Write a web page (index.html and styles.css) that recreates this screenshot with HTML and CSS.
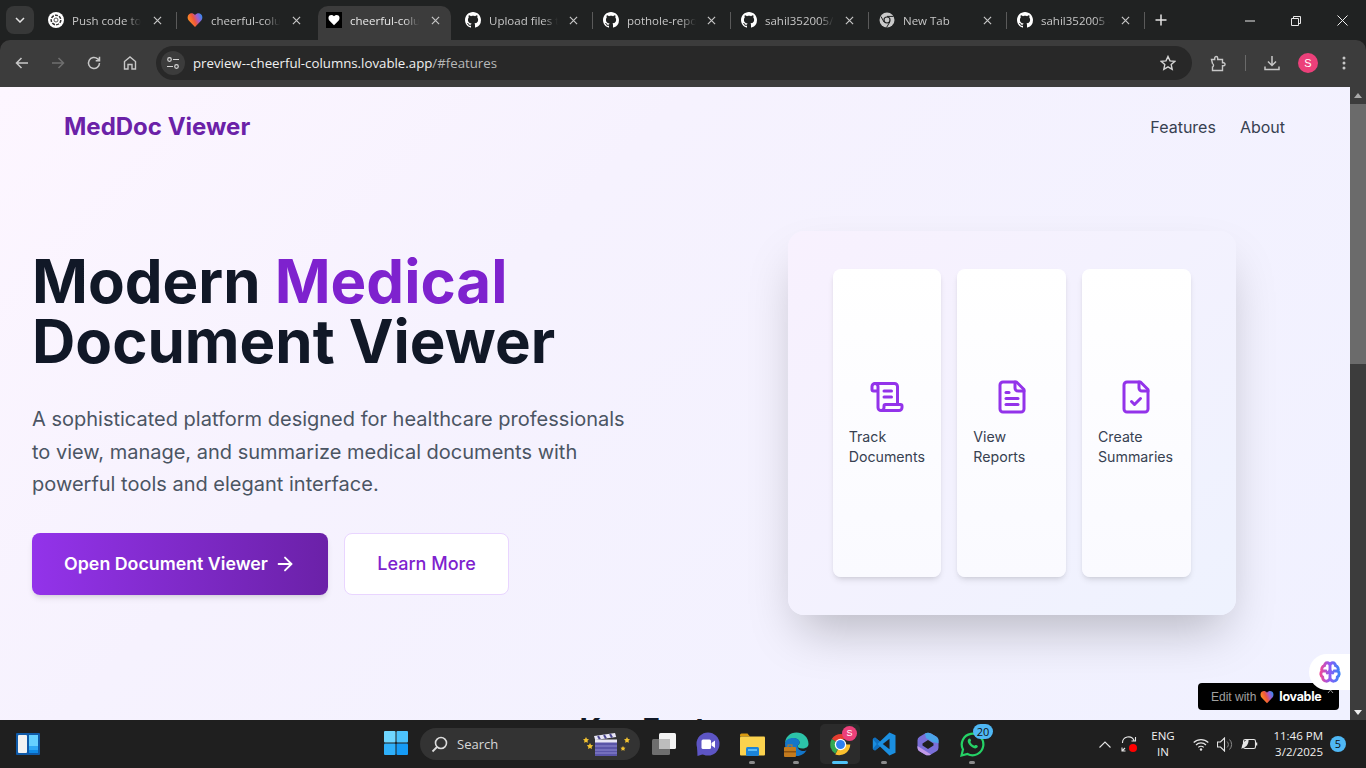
FILE: index.html
```html
<!DOCTYPE html>
<html lang="en">
<head>
<meta charset="utf-8">
<title>MedDoc Viewer</title>
<link rel="stylesheet" href="styles.css">
</head>
<body>
<svg class="defs" width="0" height="0" aria-hidden="true">
  <defs>
    <linearGradient id="heartG" x1="0" y1=".6" x2="1" y2=".2">
      <stop offset="0" stop-color="#ff9a1e"/><stop offset=".42" stop-color="#f0563a"/><stop offset=".68" stop-color="#a05cd0"/><stop offset="1" stop-color="#2f8df0"/>
    </linearGradient>
    <linearGradient id="brainG" x1="0" y1="0" x2="1" y2="0">
      <stop offset="0" stop-color="#ec4899"/><stop offset=".5" stop-color="#8b5cf6"/><stop offset="1" stop-color="#3b82f6"/>
    </linearGradient>
    <symbol id="gh" viewBox="0 0 16 16"><path fill="#fff" d="M8 0C3.58 0 0 3.58 0 8c0 3.54 2.29 6.53 5.47 7.59.4.07.55-.17.55-.38 0-.19-.01-.82-.01-1.49-2.01.37-2.53-.49-2.69-.94-.09-.23-.48-.94-.82-1.13-.28-.15-.68-.52-.01-.53.63-.01 1.08.58 1.23.82.72 1.21 1.87.87 2.33.66.07-.52.28-.87.51-1.07-1.78-.2-3.64-.89-3.64-3.95 0-.87.31-1.59.82-2.15-.08-.2-.36-1.02.08-2.12 0 0 .67-.21 2.2.82.64-.18 1.32-.27 2-.27s1.36.09 2 .27c1.53-1.04 2.2-.82 2.2-.82.44 1.1.16 1.92.08 2.12.51.56.82 1.27.82 2.15 0 3.07-1.87 3.75-3.65 3.95.29.25.54.73.54 1.48 0 1.07-.01 1.93-.01 2.2 0 .21.15.46.55.38A8.01 8.01 0 0 0 16 8c0-4.42-3.58-8-8-8z"/></symbol>
    <symbol id="heart" viewBox="0 0 24 24"><path d="M12 22.500 2.600 12.800C.2 10.200.4 5.400 3 3.200c2.600-2.200 6.500-1.600 9 1.300 2.500-2.900 6.400-3.500 9-1.300 2.600 2.200 2.800 7 .4 9.600z"/></symbol>
    <symbol id="x" viewBox="0 0 10 10"><path d="M1 1l8 8M9 1L1 9" fill="none" stroke="#c7c7c7" stroke-width="1.300"/></symbol>
  </defs>
</svg>

<header class="chrome">
  <div class="tabstrip">
    <button class="tab-menu"><svg width="10" height="6" viewBox="0 0 10 6"><path d="M1 1l4 4 4-4" fill="none" stroke="#e3e3e3" stroke-width="1.500"/></svg></button>
    <div class="tabs">
      <div class="tab sep">
        <svg class="fav" viewBox="0 0 16 16"><circle cx="8" cy="8" r="8" fill="#fff"/><circle cx="8" cy="8" r="4.800" fill="none" stroke="#333" stroke-width="1.500" stroke-dasharray="3 1.200"/><circle cx="8" cy="8" r="2" fill="none" stroke="#555" stroke-width="1"/></svg>
        <span class="tab-title">Push code to GitHub</span>
        <svg class="tab-x"><use href="#x"/></svg>
      </div>
      <div class="tab">
        <svg class="fav" fill="url(#heartG)"><use href="#heart"/></svg>
        <span class="tab-title">cheerful-columns</span>
        <svg class="tab-x"><use href="#x"/></svg>
      </div>
      <div class="tab active">
        <span class="fav fav-black"><svg width="12" height="12" fill="#fff"><use href="#heart"/></svg></span>
        <span class="tab-title">cheerful-columns</span>
        <svg class="tab-x"><use href="#x"/></svg>
      </div>
      <div class="tab sep">
        <svg class="fav"><use href="#gh"/></svg>
        <span class="tab-title">Upload files to</span>
        <svg class="tab-x"><use href="#x"/></svg>
      </div>
      <div class="tab sep">
        <svg class="fav"><use href="#gh"/></svg>
        <span class="tab-title">pothole-report</span>
        <svg class="tab-x"><use href="#x"/></svg>
      </div>
      <div class="tab sep">
        <svg class="fav"><use href="#gh"/></svg>
        <span class="tab-title">sahil352005/pot</span>
        <svg class="tab-x"><use href="#x"/></svg>
      </div>
      <div class="tab sep">
        <svg class="fav" viewBox="0 0 16 16"><circle cx="8" cy="8" r="7.500" fill="#c9c9c9"/><circle cx="8" cy="8" r="3.600" fill="#202222"/><circle cx="8" cy="8" r="2.400" fill="#c9c9c9"/><path d="M8 4.400h6.500M5 10l-3-5.500M10.800 10 7.500 15.500" stroke="#202222" stroke-width="1"/></svg>
        <span class="tab-title">New Tab</span>
        <svg class="tab-x"><use href="#x"/></svg>
      </div>
      <div class="tab sep">
        <svg class="fav"><use href="#gh"/></svg>
        <span class="tab-title">sahil352005 - pot</span>
        <svg class="tab-x"><use href="#x"/></svg>
      </div>
    </div>
    <svg class="plus" width="12" height="12" viewBox="0 0 12 12"><path d="M6 .5v11M.5 6h11" stroke="#e3e3e3" stroke-width="1.500"/></svg>
    <div class="win-controls">
      <svg width="10" height="10" viewBox="0 0 10 10"><path d="M0 5h10" stroke="#e8e8e8"/></svg>
      <svg width="10" height="10" viewBox="0 0 10 10"><path d="M.5 2.500h7v7h-7zM2.500 2.500V.5h7v7H7.500" fill="none" stroke="#e8e8e8"/></svg>
      <svg width="11" height="11" viewBox="0 0 11 11"><path d="M.5.5l10 10M10.500.5l-10 10" stroke="#f0f0f0"/></svg>
    </div>
  </div>
  <div class="toolbar">
    <div class="nav-btns">
      <svg width="16" height="16" viewBox="0 0 16 16"><path d="M14 8H2.500M7.500 3l-5 5 5 5" fill="none" stroke="#c7c7c7" stroke-width="1.500"/></svg>
      <svg width="16" height="16" viewBox="0 0 16 16"><path d="M2 8h11.500M8.500 3l5 5-5 5" fill="none" stroke="#6f6f6f" stroke-width="1.500"/></svg>
      <svg width="16" height="16" viewBox="0 0 16 16"><path d="M13.500 8A5.500 5.500 0 1 1 11.700 3.900L13.500 5.500M13.500 1.800v3.900H9.700" fill="none" stroke="#c7c7c7" stroke-width="1.500"/></svg>
      <svg width="16" height="16" viewBox="0 0 16 16"><path d="M2.500 14V6.500L8 2l5.500 4.500V14H10V9.500H6V14z" fill="none" stroke="#c7c7c7" stroke-width="1.400"/></svg>
    </div>
    <div class="omnibox">
      <span class="site-info"><svg width="14" height="14" viewBox="0 0 14 14"><g fill="none" stroke="#d5d5d5" stroke-width="1.200"><circle cx="3.500" cy="3.500" r="1.800"/><path d="M7 3.500h6M1 10.500h6"/><circle cx="10.500" cy="10.500" r="1.800"/></g></svg></span>
      <span class="url">preview--cheerful-columns.lovable.app<span class="url-dim">/#features</span></span>
      <svg class="star" width="16" height="16" viewBox="0 0 16 16"><path d="M8 1.500l2 4.400 4.700.5-3.500 3.200 1 4.700L8 11.900l-4.200 2.400 1-4.700L1.300 6.400 6 5.900z" fill="none" stroke="#d5d5d5" stroke-width="1.400"/></svg>
    </div>
    <div class="tool-right">
      <svg class="ext" width="17" height="17" viewBox="0 0 17 17"><path d="M1.500 4.500h3.200V3a1.500 1.500 0 0 1 3 0v1.500h4.800v3.200h1a1.500 1.500 0 0 1 0 3.100h-1v4.700h-10v-3.500a2 2 0 0 0 0-3.500z" fill="none" stroke="#c7c7c7" stroke-width="1.400"/></svg>
      <span class="tool-sep"></span>
      <svg class="dl" width="16" height="16" viewBox="0 0 16 16"><path d="M8 1v9M4 6.500 8 10.500l4-4M1 11.500v3h14v-3" fill="none" stroke="#c7c7c7" stroke-width="1.500"/></svg>
      <span class="avatar">S</span>
      <svg class="dots" width="4" height="14" viewBox="0 0 4 14"><circle cx="2" cy="2" r="1.500" fill="#c7c7c7"/><circle cx="2" cy="7" r="1.500" fill="#c7c7c7"/><circle cx="2" cy="12" r="1.500" fill="#c7c7c7"/></svg>
    </div>
  </div>
</header>

<div class="viewport">
  <main class="page">
    <nav class="site-nav">
      <a class="brand">MedDoc Viewer</a>
      <div class="site-links"><a>Features</a><a>About</a></div>
    </nav>
    <section class="hero">
      <div class="hero-copy">
        <h1>Modern <span class="accent">Medical</span><br>Document Viewer</h1>
        <p class="lead">A sophisticated platform designed for healthcare professionals to view, manage, and summarize medical documents with powerful tools and elegant interface.</p>
        <div class="cta-row">
          <a class="btn btn-primary">Open Document Viewer
            <svg width="22" height="22" viewBox="0 0 24 24" fill="none" stroke="currentColor" stroke-width="2" stroke-linecap="round" stroke-linejoin="round"><path d="M5 12h14"/><path d="m12 5 7 7-7 7"/></svg>
          </a>
          <a class="btn btn-outline">Learn More</a>
        </div>
      </div>
      <div class="panel">
        <div class="mini-card">
          <svg class="mini-icon" viewBox="0 0 24 24"><path d="M15 12h-5"/><path d="M15 8h-5"/><path d="M19 17V5a2 2 0 0 0-2-2H4"/><path d="M8 21h12a2 2 0 0 0 2-2v-1a1 1 0 0 0-1-1H11a1 1 0 0 0-1 1v1a2 2 0 1 1-4 0V5a2 2 0 1 0-4 0v2a1 1 0 0 0 1 1h3"/></svg>
          <span class="mini-label">Track Documents</span>
        </div>
        <div class="mini-card">
          <svg class="mini-icon" viewBox="0 0 24 24"><path d="M15 2H6a2 2 0 0 0-2 2v16a2 2 0 0 0 2 2h12a2 2 0 0 0 2-2V7Z"/><path d="M14 2v4a2 2 0 0 0 2 2h4"/><path d="M10 9H8"/><path d="M16 13H8"/><path d="M16 17H8"/></svg>
          <span class="mini-label">View Reports</span>
        </div>
        <div class="mini-card">
          <svg class="mini-icon" viewBox="0 0 24 24"><path d="M15 2H6a2 2 0 0 0-2 2v16a2 2 0 0 0 2 2h12a2 2 0 0 0 2-2V7Z"/><path d="M14 2v4a2 2 0 0 0 2 2h4"/><path d="m9 15 2 2 4-4"/></svg>
          <span class="mini-label">Create Summaries</span>
        </div>
      </div>
    </section>
    <h2 class="features-title">Key Features</h2>
  </main>
  <div class="scrollbar">
    <span class="sb-arrow"></span>
    <span class="sb-thumb"></span>
    <span class="sb-fill"></span>
    <span class="sb-arrow down"></span>
  </div>
  <div class="lovable-badge">
    <span class="edit-with">Edit with</span>
    <svg width="14" height="14" fill="url(#heartG)"><use href="#heart"/></svg>
    <span class="lovable-word">lovable</span>
    <svg class="badge-x" width="7" height="5" viewBox="0 0 7 5"><path d="M1 4l2.500-3L6 4" fill="none" stroke="#999" stroke-width="1"/></svg>
  </div>
  <div class="brain-bubble">
    <svg width="22" height="22" viewBox="0 0 24 24" fill="none" stroke="url(#brainG)" stroke-width="3.200" stroke-linecap="round" stroke-linejoin="round"><path d="M12 5a3 3 0 1 0-5.997.125 4 4 0 0 0-2.526 5.770 4 4 0 0 0 .556 6.588A4 4 0 1 0 12 18ZM12 5a3 3 0 1 1 5.997.125 4 4 0 0 1 2.526 5.770 4 4 0 0 1-.556 6.588A4 4 0 1 1 12 18ZM15 13a4.500 4.500 0 0 1-3-4 4.500 4.500 0 0 1-3 4M3.500 11h4M20.500 11h-4"/></svg>
  </div>
</div>

<footer class="taskbar">
  <div class="widgets">
    <svg width="24" height="22" viewBox="0 0 24 22"><rect width="24" height="22" rx="1" fill="#0f5aa8"/><rect x="2" y="2" width="9" height="18" rx="1" fill="#f2f2f2"/><rect x="13" y="2" width="9" height="11" fill="#66d0ff"/><rect x="13" y="13" width="9" height="4" fill="#2fa8f5"/><rect x="13" y="17" width="9" height="3" fill="#0f8ae8"/></svg>
  </div>
  <div class="task-center">
    <svg class="win-logo" width="24" height="24" viewBox="0 0 24 24"><rect width="11.500" height="11.500" rx="1" fill="#6fd6ff"/><rect x="12.500" width="11.500" height="11.500" rx="1" fill="#4cc2fb"/><rect y="12.500" width="11.500" height="11.500" rx="1" fill="#2fb0fa"/><rect x="12.500" y="12.500" width="11.500" height="11.500" rx="1" fill="#159bf5"/></svg>
    <div class="search-pill">
      <svg width="17" height="17" viewBox="0 0 17 17"><circle cx="10" cy="7" r="5.500" fill="none" stroke="#dcdcdc" stroke-width="1.600"/><path d="M6 11l-4.500 4.500" stroke="#dcdcdc" stroke-width="1.800"/></svg>
      <span class="search-text">Search</span>
      <svg class="clapper" width="56" height="32" viewBox="0 0 56 32">
        <path d="M6 9l1 2 2 .3-1.500 1.500.4 2L6 14l-1.900.8.4-2L3 11.300l2-.3z" fill="#f2c230"/>
        <path d="M10 15l1 2 2.200.3-1.600 1.600.4 2.100-2-1-2 1 .4-2.100L6.800 17.300 9 17z" fill="#f2c230"/>
        <path d="M47 9l1 2 2 .3-1.500 1.500.4 2L47 14l-1.900.8.4-2-1.500-1.500 2-.3z" fill="#f2c230"/>
        <path d="M43 18l.8 1.600 1.700.2-1.200 1.200.3 1.700-1.600-.8-1.600.8.300-1.700-1.200-1.200 1.700-.2z" fill="#f2c230"/>
        <rect x="15" y="14" width="22" height="14" fill="#5a55a8"/>
        <path d="M15 18h22M15 22h22M15 25h22" stroke="#8f8bd0" stroke-width="1"/>
        <path d="M14 8l21-3 1.200 4-21 3z" fill="#e8e6f5"/>
        <path d="M18 8l2 3.500M24 7l2 3.500M30 6l2 3.500" stroke="#4a4690" stroke-width="2"/>
        <rect x="15" y="11.500" width="22" height="3" fill="#e8e6f5"/>
      </svg>
    </div>
    <svg class="ti ti-view" width="25" height="22" viewBox="0 0 25 22"><rect x="7" y="0" width="17" height="16" rx="1.500" fill="#f4f4f4"/><rect y="6" width="18" height="16" rx="1.500" fill="#6e6e6e"/><rect x="7" y="6" width="11" height="10" fill="#bdbdbd"/></svg>
    <svg class="ti ti-meet" width="24" height="25" viewBox="0 0 24 25"><circle cx="12" cy="12" r="11.500" fill="#5d55c4"/><path d="M1 14 1.500 24 8 22z" fill="#5d55c4"/><rect x="5.500" y="7.500" width="9.500" height="9.500" rx="1.500" fill="#fff"/><path d="M15.500 11l3.500-2.500v7.500L15.500 13.500z" fill="#fff"/></svg>
    <span class="ti-wrap ti-files">
      <svg width="25" height="23" viewBox="0 0 25 23"><path d="M0 2a1.500 1.500 0 0 1 1.500-1.500h6L10 3.500H0z" fill="#d99a10"/><rect y="3.500" width="25" height="19" rx="1" fill="#fbd24e"/><rect x="6" y="14" width="13" height="9" rx="1.500" fill="#1c84d8"/><rect x="8" y="16" width="9" height="2" fill="#5dbcf5"/></svg>
      <i class="pin"></i>
    </span>
    <span class="ti-wrap ti-edge">
      <svg width="25" height="25" viewBox="0 0 25 25"><path d="M1 12C1 5 6 .5 12.500.5 19 .5 24.500 5 24.500 12c0 3-3 4.500-6 4.500-3.500 0-5-1-5-2.500 0-1 2-1 2-3.500S13 6.500 10 6.500 1 8 1 12z" fill="#2cc3a8"/><path d="M1 12c0-4 4-6 8-6 3 0 6.500 1 6.500 4.500 0 2.500-2 2.500-2 3.500 0 3 3 5 6 5 1.500 0 2.500-.5 3-1-1.500 3.500-5.500 6-9.500 6C6 24 1 19 1 12z" fill="#1476c9"/><rect x="0" y="15" width="12" height="10" rx="1" fill="#c47b1e"/><rect x="0" y="19" width="12" height="1.500" fill="#8c5210"/><rect x="4" y="13" width="4" height="2.500" fill="none" stroke="#c47b1e"/></svg>
      <i class="pin"></i>
    </span>
    <span class="ti-wrap ti-chrome">
      <svg width="25" height="25" viewBox="0 0 24 24"><path d="M12 12 3.600 6.800A10.500 10.500 0 0 1 21.400 7H12z" fill="#e53d30"/><path d="M12 12 7 20.900A10.500 10.500 0 0 1 3.600 6.800z" fill="#34a853"/><path d="M12 12h9.400A10.500 10.500 0 0 1 7 21.500z" fill="#fbc02d"/><circle cx="12" cy="12" r="5.500" fill="#fff"/><circle cx="12" cy="12" r="4.300" fill="#2f7ff0"/></svg>
      <b class="chrome-badge">S</b>
      <i class="pin pin-active"></i>
    </span>
    <span class="ti-wrap ti-code">
      <svg width="24" height="24" viewBox="0 0 24 24"><path d="M17.500.5 8 9.500 3 5.500.8 7v10L3 18.500l5-4 9.500 9 6-2.800V3.300z" fill="#1b8fe0"/><path d="M17.500 6.800 10.800 12l6.700 5.200z" fill="#1f1f1f"/><path d="M.8 7 3 5.500l5 4-2.500 2.500 2.500 2.500-5 4L.8 17l4-5z" fill="#0f6fc0"/></svg>
      <i class="pin"></i>
    </span>
    <svg class="ti ti-copilot" width="22" height="24" viewBox="0 0 22 24"><path d="M8 1.500a6 6 0 0 1 6 0l5.500 3.200a4 4 0 0 1 2 3.500v7.600a4 4 0 0 1-2 3.500L14 22.500a6 6 0 0 1-6 0l-5.500-3.200a4 4 0 0 1-2-3.500V8.200a4 4 0 0 1 2-3.500z" fill="#7a6fd8"/><path d="M8 1.500a6 6 0 0 1 6 0l5.500 3.200a4 4 0 0 1 2 3.500v3L15.500 10 9 6z" fill="#4aa4e8"/><path d="M.5 14 7 18l7 4.500a6 6 0 0 1-6 0l-5.500-3.200a4 4 0 0 1-2-3.500z" fill="#c29ae8"/><path d="M11 8l5.500 3.500v2L11 17l-5.500-3.500v-2z" fill="#1f1f1f"/></svg>
    <span class="ti-wrap ti-wa">
      <svg width="25" height="25" viewBox="0 0 25 25"><path d="M1.500 23.500 3 17.500A10.800 10.800 0 1 1 7.500 22z" fill="none" stroke="#25d366" stroke-width="2.200"/><path d="M8.500 7c1-1 2-.5 2.500 1 .3 1-.8 1.500-.5 2.300.7 1.500 2 2.700 3.500 3.300.8.300 1.300-.8 2.300-.5 1.500.5 2 1.500 1 2.500-1.500 1.500-4 .8-6.800-1.500C7.800 11.500 7 8.500 8.500 7z" fill="#25d366"/></svg>
      <b class="wa-badge">20</b>
      <i class="pin"></i>
    </span>
  </div>
  <div class="tray">
    <svg class="caret" width="12" height="7" viewBox="0 0 12 7"><path d="M.5 6.500 6 1l5.500 5.500" fill="none" stroke="#e5e5e5" stroke-width="1.100"/></svg>
    <span class="sync">
      <svg width="16" height="16" viewBox="0 0 16 16"><path d="M1.500 7A6 6 0 0 1 13 4.500M14.500 1v4h-4M14 9a6 6 0 0 1-4 5M1 15l3-3M1 11.500V15h3.500" fill="none" stroke="#e5e5e5" stroke-width="1.100"/></svg>
      <i class="rec"></i>
    </span>
    <div class="lang">ENG<br>IN</div>
    <svg class="wifi" width="16" height="13" viewBox="0 0 16 13"><path d="M.7 4.500a10.500 10.500 0 0 1 14.600 0M3 7a7 7 0 0 1 10 0M5.300 9.400a3.700 3.700 0 0 1 5.400 0" fill="none" stroke="#e5e5e5" stroke-width="1.200"/><circle cx="8" cy="11.500" r="1.200" fill="#e5e5e5"/></svg>
    <svg class="speaker" width="17" height="15" viewBox="0 0 17 15"><path d="M.5 5v5h3l4 4V1l-4 4z" fill="none" stroke="#e5e5e5" stroke-width="1.100"/><path d="M10 4.500a4 4 0 0 1 0 6M12.500 2.500a7 7 0 0 1 0 10" fill="none" stroke="#8a8a8a" stroke-width="1"/></svg>
    <svg class="battery" width="17" height="12" viewBox="0 0 17 12"><rect x="2.500" y="1.500" width="12" height="9" rx="1.800" fill="none" stroke="#e5e5e5" stroke-width="1.100"/><path d="M15.500 4.500v3" stroke="#e5e5e5" stroke-width="1.500"/><path d="M.5 11C1 6 3 2.500 7.500 1 8 5 6 9 2.500 9.500z" fill="#e5e5e5"/></svg>
    <div class="clock">11:46 PM<br>3/2/2025</div>
    <span class="notif">5</span>
  </div>
</footer>
</body>
</html>
```
FILE: styles.css
```css
* { box-sizing: border-box; margin: 0; padding: 0; }
html, body { width: 1366px; height: 768px; overflow: hidden; }
body { display: flex; flex-direction: column; font-family: Inter, "Liberation Sans", sans-serif; background: #1f1f1f; }
a { text-decoration: none; color: inherit; }
.defs { position: absolute; }

/* browser chrome */
.chrome { height: 87px; flex: none; font-family: "Open Sans", "Noto Sans", sans-serif; }
.tabstrip { height: 40px; background: #202222; display: flex; align-items: flex-end; position: relative; }
.tab-menu { width: 28px; height: 28px; margin: 0 6px 6px; background: #373838; border: 0; border-radius: 8px; display: flex; align-items: center; justify-content: center; }
.tabs { display: flex; height: 34px; }
.tab { width: 138px; height: 34px; display: flex; align-items: center; padding: 0 0 6px 8px; position: relative; }
.tab:nth-child(-n+3) { width: 139px; }
.tab.sep::after { content: ""; position: absolute; right: 2px; top: 6px; height: 17px; width: 1px; background: #5a5a5a; }
.tab.active { width: 133px; margin-right: 6px; background: #3c3c3c; border-radius: 10px 10px 0 0; }
.fav { width: 16px; height: 16px; flex: none; }
.fav-black { background: #000; display: flex; align-items: center; justify-content: center; }
.tab-title { width: 69px; margin-left: 8px; font-size: 11.5px; color: #c7c7c7; white-space: nowrap; overflow: hidden; -webkit-mask-image: linear-gradient(90deg, #000 78%, transparent 100%); mask-image: linear-gradient(90deg, #000 78%, transparent 100%); }
.tab.active .tab-title { color: #e8e8e8; }
.tab-x { width: 9px; height: 9px; margin-left: 12px; flex: none; }
.tab:nth-child(n+4) .tab-x { margin-left: 11px; }
.plus { position: absolute; left: 1155px; top: 14px; }
.win-controls { position: absolute; right: 18px; top: 15px; display: flex; gap: 36px; align-items: center; }
.toolbar { height: 47px; background: #3c3c3c; border-radius: 10px 10px 0 0; display: flex; align-items: flex-start; padding-top: 6px; }
.nav-btns { width: 156px; height: 34px; flex: none; padding-left: 14px; display: flex; gap: 20px; align-items: center; }
.omnibox { width: 1036px; height: 34px; background: #282828; border-radius: 17px; display: flex; align-items: center; padding-left: 5px; }
.site-info { width: 24px; height: 24px; border-radius: 50%; background: #3c3c3c; display: flex; align-items: center; justify-content: center; flex: none; }
.url { margin-left: 8px; font-size: 13.25px; color: #f0f0f0; white-space: nowrap; flex: 1; }
.url-dim { color: #b8b8b8; }
.star { margin-right: 16px; }
.tool-right { flex: 1; height: 34px; display: flex; align-items: center; }
.ext { margin-left: 18px; }
.tool-sep { width: 1px; height: 16px; background: #6a6a6a; margin: 0 18px; }
.dl { margin-right: 18px; }
.avatar { width: 20px; height: 20px; border-radius: 50%; background: #ec407a; color: #fff; font: 11px/20px "Liberation Sans", sans-serif; text-align: center; }
.dots { margin-left: 24px; }

/* viewport */
.viewport { height: 633px; flex: none; display: flex; position: relative; overflow: hidden; }
.page { width: 1350px; height: 633px; overflow: hidden; background: linear-gradient(135deg, #fdf6ff 0%, #f6f2fe 35%, #f0f1ff 100%); }
.site-nav { height: 80px; padding: 0 65px 0 64px; display: flex; align-items: center; justify-content: space-between; }
.brand { font-size: 24px; font-weight: 700; color: #6b21a8; margin-bottom: 2px; }
.site-links { display: flex; gap: 24px; font-size: 16px; color: #374151; }
.hero { display: flex; justify-content: space-between; padding: 64px 114px 0 32px; height: 544px; }
.hero-copy { width: 620px; }
h1 { font-size: 60px; line-height: 60px; font-weight: 700; color: #111827; margin-top: 20px; }
.accent { color: #7e22ce; }
.lead { font-size: 20px; line-height: 32.5px; color: #4b5563; margin-top: 32px; width: 610px; }
.cta-row { display: flex; gap: 16px; margin-top: 32px; }
.btn { height: 62px; display: flex; align-items: center; justify-content: center; font-size: 18px; font-weight: 500; border-radius: 8px; }
.btn-primary { width: 296px; gap: 6px; color: #fff; font-size: 17.8px; font-weight: 600; background: linear-gradient(90deg, #9333ea, #6b21a8); box-shadow: 0 4px 6px -1px rgba(0,0,0,.1), 0 2px 4px -2px rgba(0,0,0,.1); }
.btn-outline { width: 165px; color: #7e22ce; background: #fff; border: 1px solid #e9d5ff; }
.panel { width: 448px; height: 384px; background: linear-gradient(135deg, #f8f1fe, #eef2fe); border-radius: 16px; padding: 38px 45.33px 38px 44.67px; display: flex; gap: 16px; box-shadow: 0 25px 50px -12px rgba(0,0,0,.25); }
.mini-card { flex: 1 1 0; min-width: 0; background: linear-gradient(180deg, #fff, #fafaff); border-radius: 8px; padding: 16px; display: flex; flex-direction: column; align-items: center; justify-content: center; box-shadow: 0 4px 6px -1px rgba(0,0,0,.1), 0 2px 4px -2px rgba(0,0,0,.1); }
.mini-icon { width: 36px; height: 36px; flex: none; fill: none; stroke: #9333ea; stroke-width: 2; stroke-linecap: round; stroke-linejoin: round; margin-bottom: 12px; }
.mini-label { font-size: 14.2px; line-height: 20px; color: #374151; width: 100%; }
.features-title { font-size: 30px; line-height: 36px; font-weight: 700; color: #111827; text-align: center; }

/* scrollbar */
.scrollbar { width: 16px; flex: none; background: #3c3c3c; display: flex; flex-direction: column; align-items: center; }
.sb-arrow { flex: none; width: 0; height: 0; border-left: 4px solid transparent; border-right: 4px solid transparent; border-bottom: 5px solid #a8a8a8; margin: 6px 0; }
.sb-arrow.down { border-bottom: 0; border-top: 5px solid #ededed; margin: 6px 0 5px; }
.sb-thumb { width: 16px; height: 260px; background: #6b6b6b; flex: none; }
.sb-fill { flex: 1; }
.brain-bubble { position: absolute; left: 1309px; top: 567px; width: 41px; height: 36px; background: #fff; border-radius: 18px 0 0 18px; display: flex; align-items: center; justify-content: center; }
.lovable-badge { position: absolute; left: 1198px; top: 596px; width: 141px; height: 27px; background: #000; border-radius: 4px; display: flex; align-items: center; padding-left: 13px; gap: 4px; }
.edit-with { font: 12px "Liberation Sans", sans-serif; color: #a0a0a0; }
.lovable-word { font: 700 12.5px Inter, sans-serif; color: #fff; letter-spacing: -.3px; margin-left: 1px; }
.badge-x { position: absolute; right: 5px; top: 6px; z-index: 2; }

/* taskbar */
.taskbar { height: 48px; flex: none; background: #1f1f1f; position: relative; font-family: "Open Sans", "Noto Sans", sans-serif; display: flex; align-items: center; }
.widgets { margin-left: 16px; display: flex; }
.task-center { position: absolute; left: 384px; top: 0; height: 48px; display: flex; align-items: center; }
.win-logo { flex: none; margin-top: -2px; }
.search-pill { width: 220px; height: 32px; margin-left: 12px; border-radius: 16px; background: #333; display: flex; align-items: center; padding-left: 11px; position: relative; }
.search-text { font-size: 13px; color: #d8d8d8; margin-left: 9px; }
.clapper { position: absolute; right: 4px; top: 0; }
.ti { flex: none; }
.ti-view { margin-left: 12px; }
.ti-meet { margin-left: 19px; }
.ti-wrap { position: relative; width: 40px; height: 40px; display: flex; align-items: center; justify-content: center; flex: none; }
.ti-files { margin-left: 12px; }
.ti-edge { margin-left: 4px; }
.ti-chrome { margin-left: 4px; background: #2b2b2b; border-radius: 5px; }
.ti-code { margin-left: 4px; }
.ti-copilot { margin-left: 13px; }
.ti-wa { margin-left: 13px; }
.pin { position: absolute; left: 17px; bottom: 0; width: 6px; height: 3px; border-radius: 2px; background: #8c8c8c; }
.pin-active { left: 12px; width: 16px; background: #4fc3f7; }
.chrome-badge { position: absolute; left: 22px; top: 2px; width: 15px; height: 15px; border-radius: 50%; background: #ec407a; color: #fff; font: 9px/15px "Liberation Sans", sans-serif; text-align: center; }
.wa-badge { position: absolute; left: 21px; top: 0; width: 20px; height: 15px; border-radius: 8px; background: #4fb8f5; color: #111; font: 11px/15px "Open Sans", sans-serif; text-align: center; }
.tray { position: absolute; left: 1099px; top: 0; height: 48px; display: flex; align-items: center; color: #f0f0f0; font-size: 11.5px; }
.caret { flex: none; }
.sync { position: relative; width: 16px; height: 16px; margin-left: 10px; }
.rec { position: absolute; left: 8px; top: 8px; width: 8px; height: 8px; border-radius: 50%; background: #f00; }
.lang { margin-left: 12px; width: 28px; text-align: center; line-height: 16px; }
.wifi { margin-left: 16px; }
.speaker { margin-left: 8px; }
.battery { margin-left: 7px; }
.clock { margin-left: 11px; width: 54px; text-align: right; line-height: 16px; white-space: nowrap; }
.notif { margin-left: 7px; width: 16px; height: 16px; border-radius: 50%; background: #4fb8f5; color: #111; font-size: 11px; line-height: 16px; text-align: center; }
```
